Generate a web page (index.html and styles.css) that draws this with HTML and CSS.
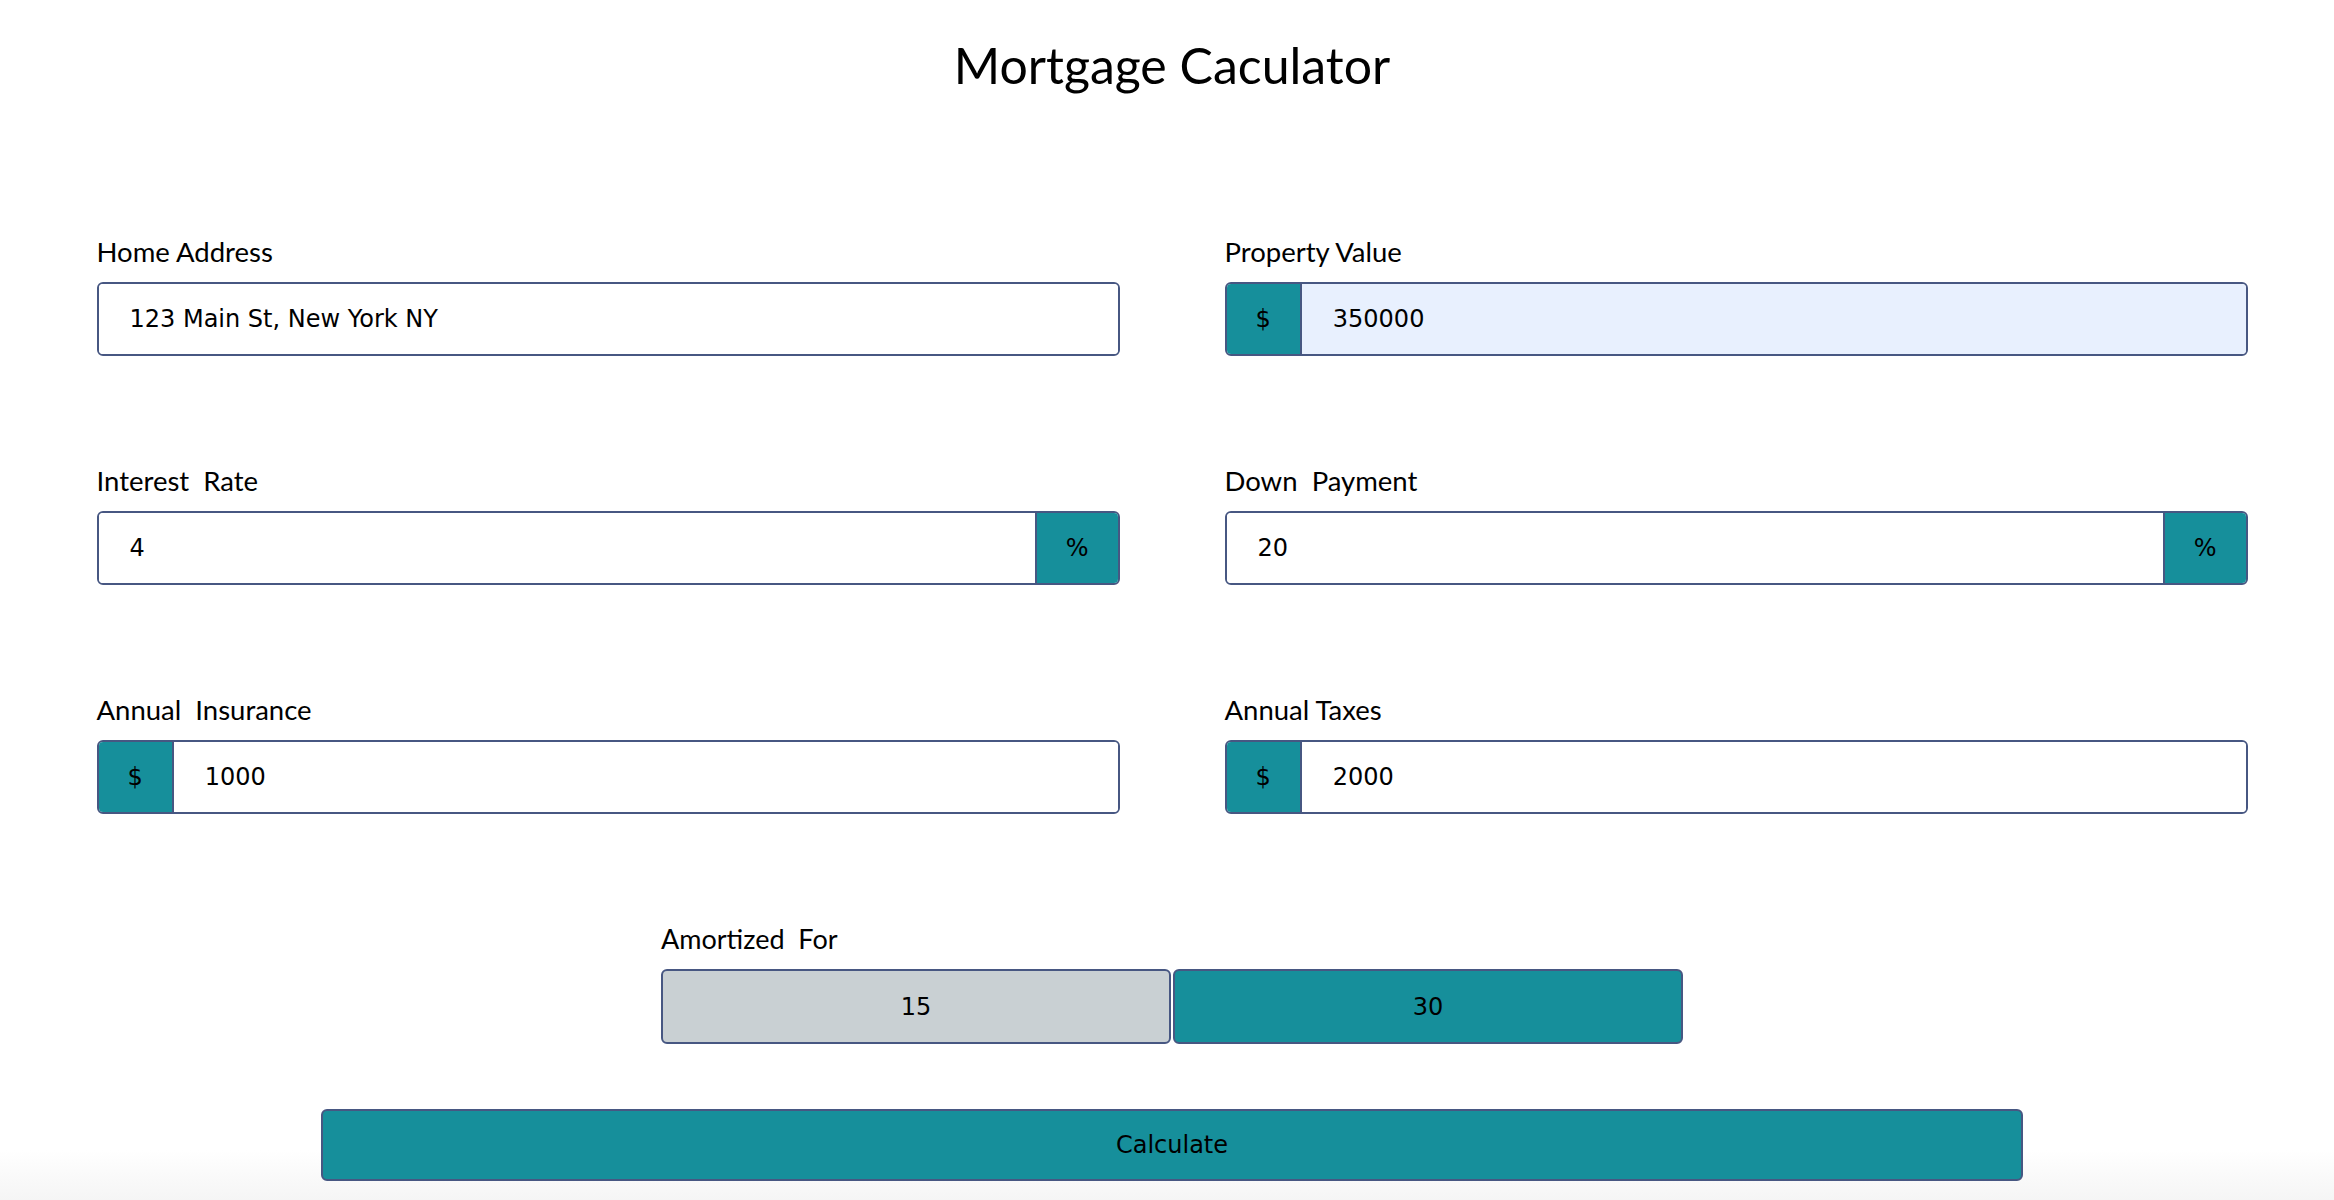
FILE: index.html
```html
<!DOCTYPE html>
<html lang="en">
<head>
<meta charset="utf-8">
<title>Mortgage Caculator</title>
<link rel="stylesheet" href="styles.css">
</head>
<body>
<div class="page">
  <h1 class="title">Mortgage Caculator</h1>
  <form class="form">
    <div class="grid">
      <div class="field">
        <label class="label">Home Address</label>
        <div class="group">
          <input class="control" type="text" value="123 Main St, New York NY">
        </div>
      </div>
      <div class="field">
        <label class="label">Property Value</label>
        <div class="group">
          <span class="addon addon-left">$</span>
          <input class="control control-filled" type="text" value="350000">
        </div>
      </div>
      <div class="field">
        <label class="label">Interest&nbsp; Rate</label>
        <div class="group">
          <input class="control" type="text" value="4">
          <span class="addon addon-right">%</span>
        </div>
      </div>
      <div class="field">
        <label class="label">Down&nbsp; Payment</label>
        <div class="group">
          <input class="control" type="text" value="20">
          <span class="addon addon-right">%</span>
        </div>
      </div>
      <div class="field">
        <label class="label">Annual&nbsp; Insurance</label>
        <div class="group">
          <span class="addon addon-left">$</span>
          <input class="control" type="text" value="1000">
        </div>
      </div>
      <div class="field">
        <label class="label">Annual Taxes</label>
        <div class="group">
          <span class="addon addon-left">$</span>
          <input class="control" type="text" value="2000">
        </div>
      </div>
    </div>
    <div class="amort">
      <label class="label label-tight">Amortized&nbsp; For</label>
      <div class="toggle">
        <button type="button" class="opt">15</button>
        <button type="button" class="opt opt-active">30</button>
      </div>
    </div>
    <button type="button" class="calc">Calculate</button>
  </form>
</div>
</body>
</html>
```
FILE: styles.css
```css
html {
  min-height: 1200px;
  background: linear-gradient(to bottom, #ffffff 0, #ffffff 1150px, #f5f5f5 1200px);
}

body {
  margin: 0;
  font-family: Lato, "Noto Sans", sans-serif;
  color: #000;
}

.page {
  padding-left: 10px;
}

.title {
  margin: 0;
  padding-top: 35px;
  font-family: Lato, "Noto Sans", sans-serif;
  font-weight: 400;
  font-size: 50px;
  line-height: 60px;
  text-align: center;
}

.form {
  margin-top: 141px;
}

.grid {
  width: 2151px;
  margin: 0 auto;
  display: grid;
  grid-template-columns: 1fr 1fr;
  column-gap: 105px;
  row-gap: 109px;
}

.field {
  display: flex;
  flex-direction: column;
}

.label {
  display: block;
  font-family: Lato, "Noto Sans", sans-serif;
  font-size: 27.5px;
  line-height: 32px;
  margin-bottom: 14px;
  white-space: nowrap;
}

.label-tight {
  font-size: 27px;
}

.group {
  display: flex;
  height: 74px;
  box-sizing: border-box;
  border: 2px solid #475782;
  border-radius: 6px;
  overflow: hidden;
  background: #fff;
}

.control {
  flex: 1;
  min-width: 0;
  border: 0;
  outline: none;
  margin: 0;
  padding: 0 0 0 31px;
  background: #fff;
  font-family: "DejaVu Sans", sans-serif;
  font-size: 24px;
  color: #000;
}

.control-filled {
  background: #e8f0fe;
}

.addon {
  display: flex;
  align-items: center;
  padding: 0 29px;
  background: #168f9b;
  font-family: "DejaVu Sans", sans-serif;
  font-size: 24px;
}

.addon-left {
  border-right: 2px solid #475782;
}

.addon-right {
  border-left: 2px solid #475782;
}

.amort {
  width: 1022px;
  margin: 109px auto 0;
}

.toggle {
  display: flex;
  gap: 2px;
}

.opt {
  flex: 1;
  height: 75px;
  margin: 0;
  border: 2px solid #475782;
  border-radius: 6px;
  background: #c9d0d3;
  font-family: "DejaVu Sans", sans-serif;
  font-size: 24px;
  color: #000;
  padding: 0;
}

.opt-active {
  background: #168f9b;
}

.calc {
  display: block;
  width: 1702px;
  height: 72px;
  margin: 65px auto 0;
  padding: 0;
  border: 2px solid #475782;
  border-radius: 6px;
  background: #168f9b;
  font-family: "DejaVu Sans", sans-serif;
  font-size: 24px;
  color: #000;
}
```
